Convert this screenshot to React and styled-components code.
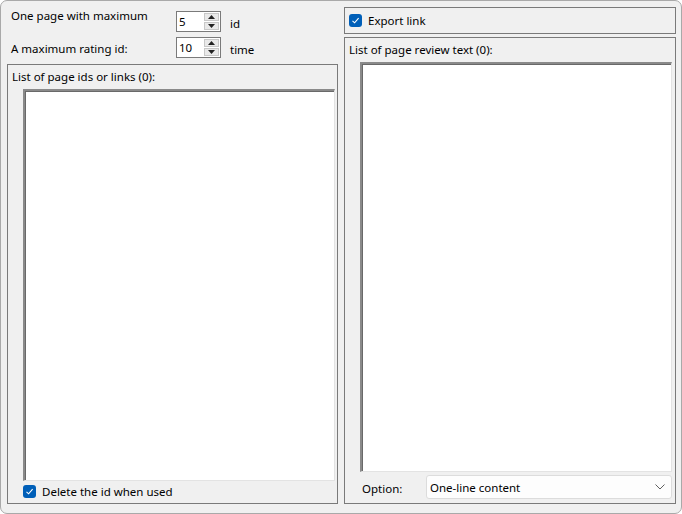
import styled, { createGlobalStyle } from "styled-components";

const GlobalStyle = createGlobalStyle`
  html, body {
    margin: 0;
    padding: 0;
    background: #ffffff;
  }
  body {
    font-family: "Noto Sans", "Open Sans", "Liberation Sans", sans-serif;
    font-size: 11.5px;
    color: #000;
  }
`;

function CheckIcon() {
  return (
    <svg width="9" height="9" viewBox="0 0 9 9">
      <path d="M1.5 4.8 L3.6 6.8 L7.6 2.2" fill="none" stroke="#fff" strokeWidth="1.1" />
    </svg>
  );
}

function ChevronDown() {
  return (
    <svg width="10" height="6" viewBox="0 0 10 6">
      <path d="M0.5 0.5 L5 5 L9.5 0.5" fill="none" stroke="#606060" strokeWidth="1" />
    </svg>
  );
}

function SpinBox({ value }) {
  return (
    <Spin>
      <SpinValue>{value}</SpinValue>
      <SpinButtons>
        <SpinArrow>
          <svg width="7" height="4" viewBox="0 0 7 4">
            <path d="M0 4 L3.5 0 L7 4 Z" fill="#222" />
          </svg>
        </SpinArrow>
        <SpinArrow>
          <svg width="7" height="4" viewBox="0 0 7 4">
            <path d="M0 0 L3.5 4 L7 0 Z" fill="#222" />
          </svg>
        </SpinArrow>
      </SpinButtons>
    </Spin>
  );
}

export default function App() {
  return (
    <>
      <GlobalStyle />
      <Window>
        <Column>
          <Settings>
            <SettingRow>
              <SettingLabel $raise>One page with maximum</SettingLabel>
              <SpinBox value="5" />
              <Unit>id</Unit>
            </SettingRow>
            <SettingRow>
              <SettingLabel>A maximum rating id:</SettingLabel>
              <SpinBox value="10" />
              <Unit>time</Unit>
            </SettingRow>
          </Settings>
          <Group>
            <GroupTitle>List of page ids or links (0):</GroupTitle>
            <ListArea />
            <CheckRow>
              <CheckBox>
                <CheckIcon />
              </CheckBox>
              Delete the id when used
            </CheckRow>
          </Group>
        </Column>
        <Column>
          <ExportBox>
            <CheckBox>
              <CheckIcon />
            </CheckBox>
            Export link
          </ExportBox>
          <Group>
            <GroupTitle>List of page review text (0):</GroupTitle>
            <ListArea $right />
            <OptionRow>
              <OptionLabel>Option:</OptionLabel>
              <Select>
                <span>One-line content</span>
                <ChevronDown />
              </Select>
            </OptionRow>
          </Group>
        </Column>
      </Window>
    </>
  );
}

const Window = styled.div`
  box-sizing: border-box;
  width: 682px;
  height: 514px;
  background: #f0f0f0;
  border: 1px solid #a9a9a9;
  border-radius: 7px;
  padding: 6px 5px 9px 6px;
  display: grid;
  grid-template-columns: 331px 332px;
  column-gap: 6px;
`;

const Column = styled.div`
  display: flex;
  flex-direction: column;
  min-height: 0;
`;

const Settings = styled.div`
  display: flex;
  flex-direction: column;
  gap: 6px;
  padding: 4px 0 0 4px;
  height: 57px;
  box-sizing: border-box;
`;

const SettingRow = styled.div`
  display: flex;
  align-items: center;
  height: 20px;
`;

const SettingLabel = styled.span`
  width: 165px;
  white-space: nowrap;
  position: relative;
  top: ${(p) => (p.$raise ? "-6px" : "1px")};
`;

const Unit = styled.span`
  margin-left: 9px;
  position: relative;
  top: 2px;
`;

const Spin = styled.div`
  box-sizing: border-box;
  width: 45px;
  height: 21px;
  background: #fff;
  border: 1px solid #7a7a7a;
  display: flex;
  align-items: center;
`;

const SpinValue = styled.span`
  flex: 1;
  padding-left: 2px;
`;

const SpinButtons = styled.div`
  width: 15px;
  height: 17px;
  display: flex;
  flex-direction: column;
  gap: 1px;
  margin-right: 1px;
`;

const SpinArrow = styled.div`
  flex: 1;
  background: #e9e9e9;
  border: 1px solid #c8c8c8;
  display: flex;
  align-items: center;
  justify-content: center;
`;

const Group = styled.div`
  box-sizing: border-box;
  border: 1px solid #7a7a7a;
  display: flex;
  flex-direction: column;
  flex: 1;
  min-height: 0;
  padding: 3px 2px 3px 15px;
`;

const GroupTitle = styled.div`
  margin-left: -11px;
  height: 18px;
  line-height: 18px;
  margin-bottom: 3px;
`;

const ListArea = styled.div`
  flex: 1;
  background: #fff;
  border-top: 2px solid #8a8a8a;
  border-left: 2px solid #8a8a8a;
  border-right: 1px solid #e3e3e3;
  border-bottom: 1px solid #e3e3e3;
  box-shadow: inset 1px 1px 0 #696969;
  margin-right: ${(p) => (p.$right ? "1px" : "0")};
`;

const CheckRow = styled.div`
  display: flex;
  align-items: center;
  gap: 6px;
  height: 18px;
  margin-top: 1px;
`;

const CheckBox = styled.span`
  width: 13px;
  height: 13px;
  border-radius: 3px;
  background: #005fb8;
  display: inline-flex;
  align-items: center;
  justify-content: center;
  flex: none;
`;

const ExportBox = styled.div`
  box-sizing: border-box;
  height: 27px;
  border: 1px solid #7a7a7a;
  display: flex;
  align-items: center;
  gap: 6px;
  padding-left: 4px;
  margin-bottom: 3px;
`;

const OptionRow = styled.div`
  display: flex;
  align-items: center;
  height: 24px;
  margin: 3px 1px 1px -13px;
`;

const OptionLabel = styled.span`
  width: 79px;
  padding-left: 15px;
  box-sizing: border-box;
  flex: none;
  position: relative;
  top: 1px;
`;

const Select = styled.div`
  flex: 1;
  height: 24px;
  box-sizing: border-box;
  background: #fdfdfd;
  border: 1px solid #dcdcdc;
  border-radius: 3px;
  display: flex;
  align-items: center;
  justify-content: space-between;
  padding: 0 6px 0 3px;
`;
